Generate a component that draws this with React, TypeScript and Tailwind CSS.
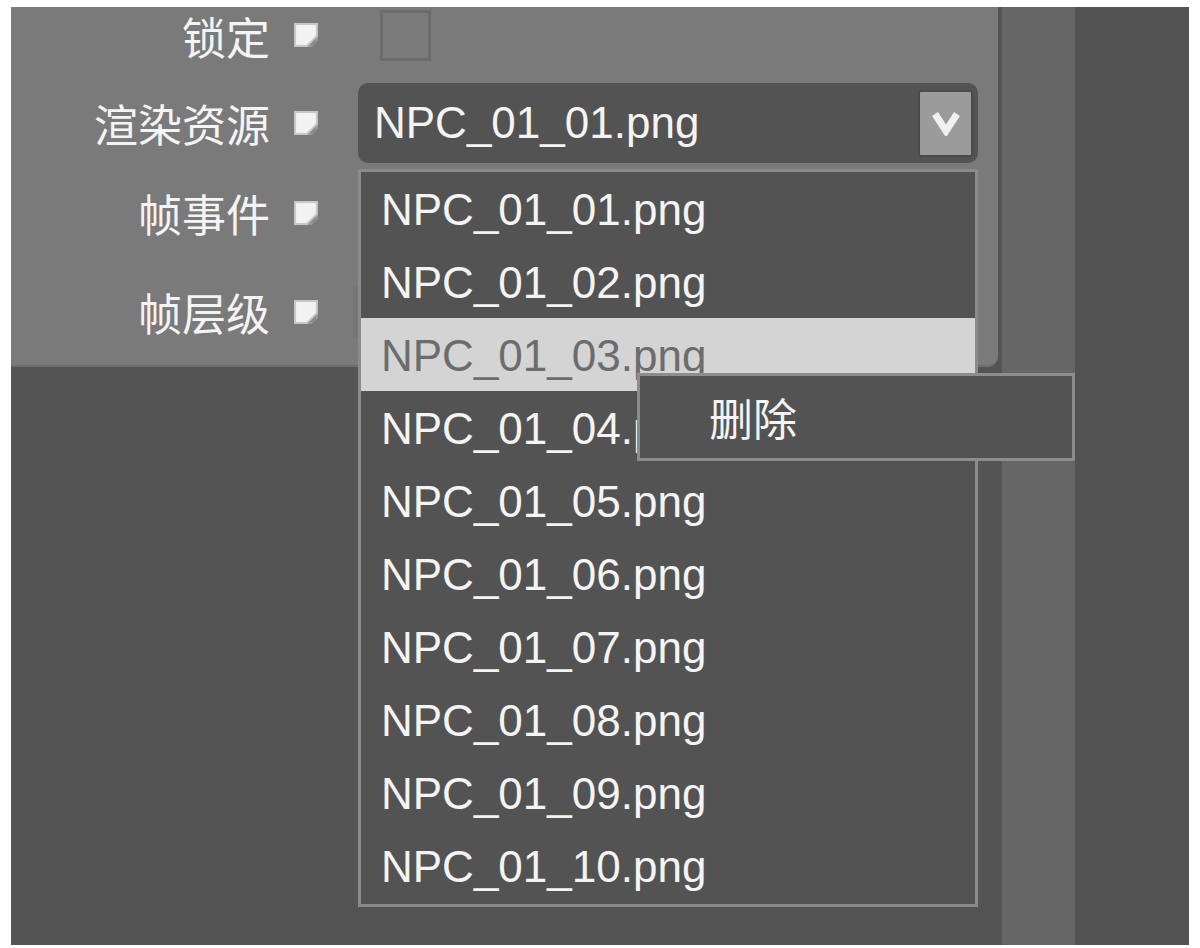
import React from "react";

const cjk = { fontFamily: '"Noto Sans CJK SC", "Noto Sans", sans-serif' };
const latin = { fontFamily: '"Liberation Sans", Arial, sans-serif' };

function FlagIcon() {
  return (
    <svg width="25" height="25" viewBox="0 0 24 24" className="shrink-0">
      <polygon points="0,0 23,0 23,13 13,23 0,23" fill="#c8c8c8" />
      <polygon points="2,2 21,2 21,12 12,21 2,21" fill="#f2f2f2" />
      <polygon points="23,13 13,23 17,23 23,17" fill="#9a9a9a" />
      <polygon points="21,15 15,21 19,21 21,19" fill="#8a8a8a" />
    </svg>
  );
}

function Label({ text }: { text: string }) {
  return (
    <div
      className="w-[259px] shrink-0 text-right text-[44px] leading-none text-[#f4f4f4]"
      style={cjk}
    >
      {text}
    </div>
  );
}

const files = Array.from({ length: 10 }, (_, i) => `NPC_01_${String(i + 1).padStart(2, "0")}.png`);

export default function App() {
  return (
    <div className="relative w-[1200px] h-[948px] bg-white pt-[7px] pl-[11px] pr-[11px] pb-[3px] overflow-hidden">
      <div className="flex h-full">
        <div className="w-[991px] shrink-0 bg-[#545454]">
          <div className="w-[987px] h-[360px] bg-[#7a7a7a] rounded-br-[10px] border-b-[2px] border-[#6e6e6e] flex flex-col pt-[3px]">
            <div className="flex items-center h-[51px]">
              <Label text="锁定" />
              <div className="ml-[24px]"><FlagIcon /></div>
              <div className="ml-[61px] w-[51px] h-[51px] border-[3px] border-[#6b6b6b]" />
            </div>
            <div className="flex items-center h-[80px] mt-[22px]">
              <Label text="渲染资源" />
              <div className="ml-[24px]"><FlagIcon /></div>
              <div className="ml-[39px] w-[620px] h-[80px] rounded-[10px] bg-[#535353] flex items-center justify-between pl-[16px] pr-[5px]">
                <span className="text-[44px] leading-none text-[#f4f4f4]" style={latin}>
                  NPC_01_01.png
                </span>
                <div className="w-[55px] h-[67px] bg-[#9b9b9b] border-2 border-[#4a4a4a] rounded-[3px] flex items-center justify-center">
                  <svg width="30" height="26" viewBox="0 0 30 26">
                    <path d="M4 4 L15 21 L26 4" fill="none" stroke="#f0f0f0" strokeWidth="7" strokeLinejoin="miter" />
                  </svg>
                </div>
              </div>
            </div>
            <div className="flex items-center h-[60px] mt-[20px]">
              <Label text="帧事件" />
              <div className="ml-[24px]"><FlagIcon /></div>
            </div>
            <div className="flex items-center h-[50px] mt-[44px]">
              <Label text="帧层级" />
              <div className="ml-[24px]"><FlagIcon /></div>
              <div className="ml-[34px] w-[620px] h-[50px] bg-[#757575]" />
            </div>
          </div>
        </div>
        <div className="w-[73px] shrink-0 bg-[#666666]" />
        <div className="flex-1 bg-[#535353]" />
      </div>

      <div className="absolute left-[358px] top-[169px] w-[620px] h-[738px] border-[3px] border-[#8b8b8b] bg-[#535353] flex flex-col">
        {files.map((f, i) => (
          <div
            key={f}
            className={
              i === 2
                ? "h-[73px] shrink-0 flex items-center pl-[20px] pt-[3px] bg-[#d4d4d4] text-[#6c6c6c]"
                : "h-[73px] shrink-0 flex items-center pl-[20px] pt-[3px] text-[#f4f4f4]"
            }
          >
            <span className="text-[44px] leading-none" style={latin}>{f}</span>
          </div>
        ))}
      </div>

      <div className="absolute left-[637px] top-[373px] w-[438px] h-[88px] border-[3px] border-[#8d8d8d] bg-[#535353] flex items-center pl-[69px]">
        <span className="text-[44px] leading-none text-[#f4f4f4]" style={cjk}>删除</span>
      </div>
    </div>
  );
}
